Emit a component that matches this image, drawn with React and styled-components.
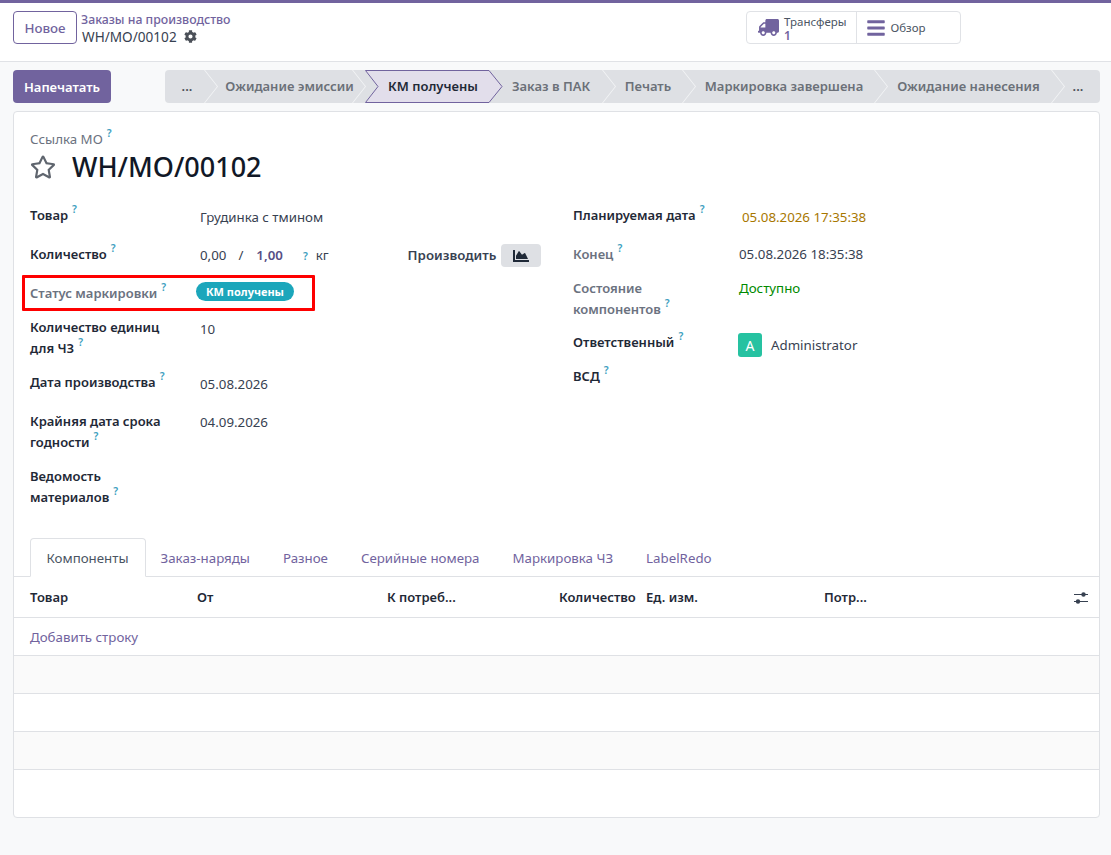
import React from 'react'
import styled, { createGlobalStyle } from 'styled-components'
import { FaCog, FaTruck, FaBars, FaRegStar, FaChartArea } from 'react-icons/fa'

const PURPLE = '#71639e'

const GlobalStyle = createGlobalStyle`
  html, body {
    margin: 0;
    padding: 0;
    background: #f8f9fa;
  }
  body {
    font-family: 'Noto Sans', 'Open Sans', sans-serif;
    font-size: 13.3px;
    line-height: 21px;
    color: #374151;
  }
  * {
    box-sizing: border-box;
  }
`

const Page = styled.div`
  width: 1111px;
  height: 855px;
  overflow: hidden;
`

const TopBar = styled.header`
  height: 62px;
  background: #fff;
  border-top: 3px solid ${PURPLE};
  border-bottom: 1px solid #e0e2e6;
  display: flex;
  align-items: flex-start;
  padding: 8px 0 0 13px;
`

const NewButton = styled.button`
  width: 64px;
  height: 33px;
  background: #fff;
  border: 1px solid ${PURPLE};
  border-radius: 4px;
  color: ${PURPLE};
  font: 500 13.3px 'Noto Sans', sans-serif;
  padding: 0;
`

const Breadcrumb = styled.div`
  width: 152px;
  flex: none;
  margin-left: 4px;
  line-height: 17px;
`

const CrumbLink = styled.div`
  color: ${PURPLE};
  font-size: 12.3px;
  font-weight: 500;
  white-space: nowrap;
`

const CrumbCurrent = styled.div`
  display: flex;
  align-items: center;
  gap: 7px;
  color: #374151;
  font-size: 13.6px;
  padding-left: 1px;

  svg {
    width: 13px;
    height: 13px;
    color: #4b5058;
  }
`

const StatGroup = styled.div`
  margin-left: 513px;
  width: 215px;
  height: 33px;
  display: flex;
  background: #fff;
  border: 1px solid #e0e2e6;
  border-radius: 4px;
`

const StatButton = styled.div`
  display: flex;
  align-items: center;
  width: ${(p) => p.$width}px;
  padding-left: ${(p) => p.$pad}px;
  border-right: ${(p) => (p.$divider ? '1px solid #e0e2e6' : 'none')};
  color: #4b5563;
  font-size: 11.5px;

  svg {
    color: ${PURPLE};
    flex: none;
  }
`

const StatText = styled.div`
  margin-left: 5px;
  line-height: 15px;
`

const StatValue = styled.div`
  color: ${PURPLE};
  font-weight: 600;
  font-size: 12px;
  line-height: 13px;
`

const ControlRow = styled.div`
  height: 49px;
  display: flex;
  align-items: flex-start;
  padding: 8px 0 0 13px;
`

const PrintButton = styled.button`
  width: 98px;
  height: 33px;
  background: ${PURPLE};
  border: none;
  border-radius: 4px;
  color: #fff;
  font: 600 13px 'Noto Sans', sans-serif;
  padding: 0;
`

const StatusBar = styled.div`
  margin-left: 54px;
  width: 935px;
  height: 33px;
  display: flex;
  background: #dee0e4;
  border-radius: 4px;
  overflow: hidden;
`

const Step = styled.div`
  position: relative;
  flex: none;
  width: ${(p) => p.$width}px;
  height: 33px;
  padding-right: ${(p) => p.$pad}px;
  display: flex;
  align-items: center;
  justify-content: center;
  font-weight: 600;
  font-size: 13px;
  color: ${(p) => (p.$dots ? '#4b5058' : '#6b7078')};

  &::after {
    content: '';
    display: ${(p) => (p.$last ? 'none' : 'block')};
    position: absolute;
    top: 0;
    right: -1px;
    width: 14px;
    height: 33px;
    background: #f3f4f6;
    clip-path: polygon(0 0, 1px 0, 100% 50%, 1px 100%, 0 100%, calc(100% - 1px) 50%);
    z-index: 1;
  }
`

const ActiveStep = styled.div`
  position: relative;
  flex: none;
  width: 138px;
  height: 33px;
  padding-right: 2px;
  display: flex;
  align-items: center;
  justify-content: center;
  font-weight: 600;
  font-size: 13px;
  color: #1f2937;
  z-index: 2;

  svg {
    position: absolute;
    inset: 0;
  }

  span {
    position: relative;
  }
`

const Sheet = styled.main`
  margin: 0 0 0 13px;
  width: 1087px;
  height: 707px;
  background: #fff;
  border: 1px solid #dfe1e5;
  border-radius: 4px;
`

const Head = styled.div`
  padding: 17px 16px 0;
  height: 93px;
`

const RefLabel = styled.div`
  color: #6b7280;
  line-height: 21px;
`

const Title = styled.div`
  display: flex;
  align-items: center;
  margin-top: -2px;

  svg {
    width: 26px;
    height: 26px;
    color: #5f656e;
    margin-right: 16px;
  }
`

const TitleText = styled.h1`
  margin: 0;
  font-size: 27px;
  line-height: 38px;
  font-weight: 500;
  color: #111827;
`

const Help = styled.sup`
  color: #3f9fc0;
  font-size: 10.5px;
  font-weight: 600;
  line-height: 0;
  margin-left: 4px;
  vertical-align: 7px;
`

const UnitHelp = styled(Help)`
  margin-left: 20px;
  margin-right: 8px;
`

const FormGrid = styled.div`
  display: flex;
  height: 333px;
  padding-left: 16px;
`

const Column = styled.div`
  width: ${(p) => p.$width}px;
  flex: none;
`

const Row = styled.div`
  position: relative;
  display: grid;
  grid-template-columns: ${(p) => p.$label}px 1fr;
  height: ${(p) => p.$height}px;
  align-items: start;
`

const Label = styled.div`
  max-width: 150px;
  font-size: 13px;
  font-weight: 600;
  color: ${(p) => (p.$muted ? '#6b7280' : '#1f2937')};
`

const Value = styled.div`
  display: flex;
  align-items: center;
  padding-top: ${(p) => p.$top ?? 2}px;
  padding-left: ${(p) => p.$left ?? 0}px;
  color: ${(p) => p.$color || '#374151'};
`

const QtyRow = styled.div`
  display: flex;
  align-items: center;
  width: 342px;
`

const Qty = styled.span`
  color: ${(p) => (p.$strong ? '#574f86' : '#374151')};
  font-weight: ${(p) => (p.$strong ? 600 : 400)};
  margin-right: ${(p) => p.$gap}px;
`

const ProduceLabel = styled.span`
  margin-left: 79px;
  font-weight: 600;
  color: #374151;
`

const ChartButton = styled.span`
  display: inline-flex;
  align-items: center;
  justify-content: center;
  width: 40px;
  height: 23px;
  margin-left: 5px;
  background: #dee0e4;
  border-radius: 4px;
  color: #1f2937;

  svg {
    width: 16px;
    height: 16px;
  }
`

const Badge = styled.span`
  display: inline-flex;
  align-items: center;
  height: 19px;
  margin: -1px 0 0 -4px;
  padding: 0 10px;
  border-radius: 10px;
  background: #1ba6bb;
  color: #fff;
  font-size: 11px;
  font-weight: 700;
`

const Highlight = styled.div`
  position: absolute;
  left: -8px;
  top: -8px;
  width: 293px;
  height: 36px;
  border: 3px solid #fe0000;
  border-radius: 1px;
  pointer-events: none;
`

const Avatar = styled.span`
  width: 24px;
  height: 24px;
  border-radius: 3px;
  background: #26c2a1;
  color: #fff;
  display: inline-flex;
  align-items: center;
  justify-content: center;
  margin: 0 9px 0 -1px;
  font-size: 14px;
`

const Tabs = styled.nav`
  display: flex;
  height: 39px;
  padding-left: 16px;
  border-bottom: 1px solid #dfe1e5;
`

const Tab = styled.div`
  height: 39px;
  padding: 9px ${(p) => (p.$active ? '16.5px' : '15.5px')} 0 15.5px;
  margin-right: ${(p) => (p.$active ? '-2px' : '0')};
  color: ${(p) => (p.$active ? '#4b5563' : PURPLE)};
  background: ${(p) => (p.$active ? '#fff' : 'transparent')};
  border: 1px solid ${(p) => (p.$active ? '#dfe1e5' : 'transparent')};
  border-bottom-color: ${(p) => (p.$active ? '#fff' : 'transparent')};
  border-radius: 4px 4px 0 0;
`

const TableHead = styled.div`
  position: relative;
  display: grid;
  grid-template-columns: 167px 190px 172px 87px 178px 1fr;
  height: 41px;
  align-items: center;
  padding: 0 16px;
  border-bottom: 1px solid #dfe1e5;
  font-size: 13px;
  font-weight: 600;
  color: #1f2937;
`

const SettingsIcon = styled.svg`
  position: absolute;
  right: 10px;
  top: 13px;
  width: 16px;
  height: 16px;
  color: #374151;
`

const AddRow = styled.div`
  height: 38px;
  padding: 9px 16px 0;
  border-bottom: 1px solid #dfe1e5;
  color: ${PURPLE};
`

const EmptyRow = styled.div`
  height: 38px;
  background: ${(p) => (p.$odd ? '#fafafa' : '#fff')};
  border-bottom: 1px solid #dfe1e5;
`

const FlippedTruck = styled(FaTruck)`
  transform: scaleX(-1);
`

const STEPS = [
  { text: '...', width: 52, pad: 8, dots: true },
  { text: 'Ожидание эмиссии', width: 148, pad: 3 },
  { active: true, text: 'КМ получены' },
  { text: 'Заказ в ПАК', width: 112, pad: 16 },
  { text: 'Печать', width: 80, pad: 14 },
  { text: 'Маркировка завершена', width: 192, pad: 14 },
  { text: 'Ожидание нанесения', width: 177, pad: 14 },
  { text: '...', width: 36, pad: 8, dots: true, last: true },
]

const TABS = ['Компоненты', 'Заказ-наряды', 'Разное', 'Серийные номера', 'Маркировка ЧЗ', 'LabelRedo']

const App = () => {
  return (
    <Page>
      <GlobalStyle />
      <TopBar>
        <NewButton>Новое</NewButton>
        <Breadcrumb>
          <CrumbLink>Заказы на производство</CrumbLink>
          <CrumbCurrent>
            WH/MO/00102 <FaCog />
          </CrumbCurrent>
        </Breadcrumb>
        <StatGroup>
          <StatButton $width={110} $pad={11} $divider>
            <FlippedTruck size={21} />
            <StatText>
              Трансферы
              <StatValue>1</StatValue>
            </StatText>
          </StatButton>
          <StatButton $width={104} $pad={9}>
            <FaBars size={20} />
            <StatText>Обзор</StatText>
          </StatButton>
        </StatGroup>
      </TopBar>

      <ControlRow>
        <PrintButton>Напечатать</PrintButton>
        <StatusBar>
          {STEPS.map((s) =>
            s.active ? (
              <ActiveStep key={s.text}>
                <svg width="138" height="33" viewBox="0 0 138 33">
                  <polygon
                    points="0.5,0.5 124,0.5 137,16.5 124,32.5 0.5,32.5 13,16.5"
                    fill="#e2deeb"
                    stroke={PURPLE}
                  />
                </svg>
                <span>{s.text}</span>
              </ActiveStep>
            ) : (
              <Step key={s.text + s.width} $width={s.width} $pad={s.pad} $dots={s.dots} $last={s.last}>
                {s.text}
              </Step>
            )
          )}
        </StatusBar>
      </ControlRow>

      <Sheet>
        <Head>
          <RefLabel>
            Ссылка МО<Help>?</Help>
          </RefLabel>
          <Title>
            <FaRegStar />
            <TitleText>WH/MO/00102</TitleText>
          </Title>
        </Head>

        <FormGrid>
          <Column $width={543}>
            <Row $label={170} $height={39}>
              <Label>
                Товар<Help>?</Help>
              </Label>
              <Value>Грудинка с тмином</Value>
            </Row>
            <Row $label={170} $height={39}>
              <Label>
                Количество<Help>?</Help>
              </Label>
              <QtyRow>
                <Qty $gap={12}>0,00</Qty>
                <Qty $gap={13}>/</Qty>
                <Qty $strong $gap={0}>1,00</Qty>
                <UnitHelp>?</UnitHelp>
                <span>кг</span>
                <ProduceLabel>Производить</ProduceLabel>
                <ChartButton>
                  <FaChartArea />
                </ChartButton>
              </QtyRow>
            </Row>
            <Row $label={170} $height={34}>
              <Highlight />
              <Label $muted>
                Статус маркировки<Help>?</Help>
              </Label>
              <Value $top={0}>
                <Badge>КМ получены</Badge>
              </Value>
            </Row>
            <Row $label={170} $height={55}>
              <Label>
                Количество единиц для ЧЗ<Help>?</Help>
              </Label>
              <Value>10</Value>
            </Row>
            <Row $label={170} $height={39}>
              <Label>
                Дата производства<Help>?</Help>
              </Label>
              <Value>05.08.2026</Value>
            </Row>
            <Row $label={170} $height={55}>
              <Label>
                Крайняя дата срока годности<Help>?</Help>
              </Label>
              <Value $top={1}>04.09.2026</Value>
            </Row>
            <Row $label={170} $height={42}>
              <Label>
                Ведомость материалов<Help>?</Help>
              </Label>
            </Row>
          </Column>

          <Column $width={500}>
            <Row $label={166} $height={39}>
              <Label>
                Планируемая дата<Help>?</Help>
              </Label>
              <Value $color="#a87700" $left={3}>05.08.2026 17:35:38</Value>
            </Row>
            <Row $label={166} $height={34}>
              <Label $muted>
                Конец<Help>?</Help>
              </Label>
              <Value $top={0}>05.08.2026 18:35:38</Value>
            </Row>
            <Row $label={166} $height={54}>
              <Label $muted>
                Состояние компонентов<Help>?</Help>
              </Label>
              <Value $top={0} $color="#008a00">Доступно</Value>
            </Row>
            <Row $label={166} $height={34}>
              <Label>
                Ответственный<Help>?</Help>
              </Label>
              <Value $top={1}>
                <Avatar>A</Avatar>
                Administrator
              </Value>
            </Row>
            <Row $label={166} $height={38}>
              <Label>
                ВСД<Help>?</Help>
              </Label>
            </Row>
          </Column>
        </FormGrid>

        <Tabs>
          {TABS.map((t, i) => (
            <Tab key={t} $active={i === 0}>
              {t}
            </Tab>
          ))}
        </Tabs>

        <TableHead>
          <span>Товар</span>
          <span>От</span>
          <span>К потреб...</span>
          <span>Количество</span>
          <span>Ед. изм.</span>
          <span>Потр...</span>
          <SettingsIcon viewBox="0 0 16 16">
            <path d="M1 4.5h14M1 11.5h14" stroke="currentColor" strokeWidth="1.2" />
            <circle cx="10.5" cy="4.5" r="2.2" fill="currentColor" />
            <circle cx="5" cy="11.5" r="2.2" fill="currentColor" />
          </SettingsIcon>
        </TableHead>
        <AddRow>Добавить строку</AddRow>
        <EmptyRow $odd />
        <EmptyRow />
        <EmptyRow $odd />
      </Sheet>
    </Page>
  )
}

export default App
